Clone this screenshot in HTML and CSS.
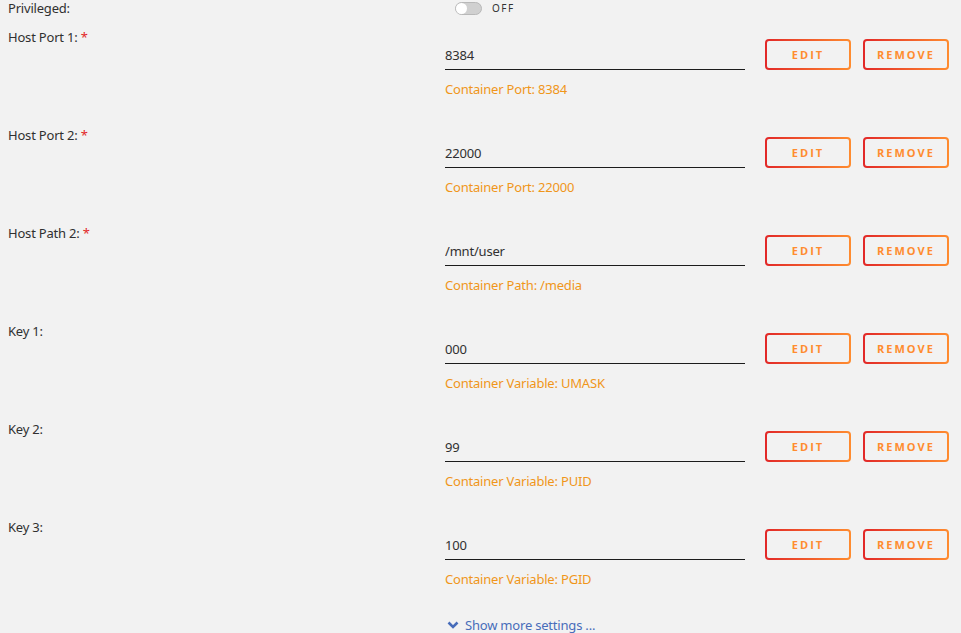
FILE: index.html
```html
<!DOCTYPE html>
<html lang="en">
<head>
    <meta charset="UTF-8">
    <meta name="viewport" content="width=device-width, initial-scale=1.0">
    <title>Container Settings</title>
    <link rel="stylesheet" href="styles.css">
</head>
<body>
    <form class="settings">
        <div class="row row-switch">
            <div class="label">Privileged:</div>
            <div class="field">
                <span class="switch"><span class="knob"></span></span>
                <span class="switch-text">OFF</span>
            </div>
        </div>

        <div class="row">
            <div class="label">Host Port 1: <span class="req">*</span></div>
            <div class="field">
                <input type="text" value="8384">
                <p class="hint">Container Port: 8384</p>
            </div>
            <div class="actions">
                <button type="button">Edit</button>
                <button type="button">Remove</button>
            </div>
        </div>

        <div class="row">
            <div class="label">Host Port 2: <span class="req">*</span></div>
            <div class="field">
                <input type="text" value="22000">
                <p class="hint">Container Port: 22000</p>
            </div>
            <div class="actions">
                <button type="button">Edit</button>
                <button type="button">Remove</button>
            </div>
        </div>

        <div class="row">
            <div class="label">Host Path 2: <span class="req">*</span></div>
            <div class="field">
                <input type="text" value="/mnt/user">
                <p class="hint">Container Path: /media</p>
            </div>
            <div class="actions">
                <button type="button">Edit</button>
                <button type="button">Remove</button>
            </div>
        </div>

        <div class="row">
            <div class="label">Key 1:</div>
            <div class="field">
                <input type="text" value="000">
                <p class="hint">Container Variable: UMASK</p>
            </div>
            <div class="actions">
                <button type="button">Edit</button>
                <button type="button">Remove</button>
            </div>
        </div>

        <div class="row">
            <div class="label">Key 2:</div>
            <div class="field">
                <input type="text" value="99">
                <p class="hint">Container Variable: PUID</p>
            </div>
            <div class="actions">
                <button type="button">Edit</button>
                <button type="button">Remove</button>
            </div>
        </div>

        <div class="row">
            <div class="label">Key 3:</div>
            <div class="field">
                <input type="text" value="100">
                <p class="hint">Container Variable: PGID</p>
            </div>
            <div class="actions">
                <button type="button">Edit</button>
                <button type="button">Remove</button>
            </div>
        </div>

        <div class="more">
            <a href="#">
                <svg width="12" height="8" viewBox="0 0 12 8"><path d="M1.5 1.5 L6 6 L10.5 1.5" fill="none" stroke="currentColor" stroke-width="2.6"/></svg>
                Show more settings ...
            </a>
        </div>
    </form>
</body>
</html>
```

FILE: styles.css
```css
body {
    font-family: "Noto Sans", "Open Sans", sans-serif;
    font-size: 13px;
    letter-spacing: -0.2px;
    color: #303030;
    background-color: #f2f2f2;
    margin: 0;
    padding: 0 8px;
}

.row {
    display: flex;
    align-items: flex-start;
    padding-bottom: 28px;
}

.label {
    width: 437px;
    flex: none;
    line-height: 18px;
}

.req {
    color: #e22828;
}

.field {
    width: 300px;
    flex: none;
    padding-top: 12px;
}

input[type="text"] {
    display: block;
    width: 100%;
    box-sizing: border-box;
    height: 30px;
    padding: 0;
    border: none;
    border-bottom: 1px solid #1c1c1c;
    background: transparent;
    font: inherit;
    letter-spacing: inherit;
    color: #303030;
    outline: none;
}

.hint {
    margin: 10px 0 0;
    line-height: 18px;
    color: #f0961a;
}

.actions {
    display: flex;
    gap: 12px;
    margin-left: 20px;
    padding-top: 11px;
}

button {
    width: 86px;
    height: 31px;
    padding: 0;
    border: 2px solid transparent;
    border-radius: 4px;
    background: linear-gradient(#f2f2f2, #f2f2f2) padding-box,
                linear-gradient(90deg, #e22828, #ff8c2f) border-box;
    color: #ff8c2f;
    font-family: "Open Sans", sans-serif;
    font-size: 11px;
    font-weight: 700;
    letter-spacing: 2px;
    text-transform: uppercase;
    cursor: pointer;
}

/* privileged toggle */
.row-switch {
    padding-bottom: 12px;
}

.row-switch .label {
    line-height: 16px;
}

.row-switch .field {
    padding-top: 0;
    display: flex;
    align-items: center;
    height: 16px;
}

.switch {
    display: inline-block;
    position: relative;
    width: 25px;
    height: 11px;
    margin-left: 10px;
    border: 1px solid #b8b8b8;
    border-radius: 7px;
    background: #d0d0d0;
}

.knob {
    position: absolute;
    left: 0;
    top: 0;
    width: 11px;
    height: 11px;
    border-radius: 50%;
    background: #fff;
}

.switch-text {
    margin-left: 10px;
    font-size: 10px;
    letter-spacing: 1.5px;
    color: #333;
}

.more {
    margin-top: -2px;
    margin-left: 439px;
    line-height: 20px;
}

.more a {
    display: inline-flex;
    align-items: center;
    gap: 6px;
    color: #486dba;
    text-decoration: none;
}
```
